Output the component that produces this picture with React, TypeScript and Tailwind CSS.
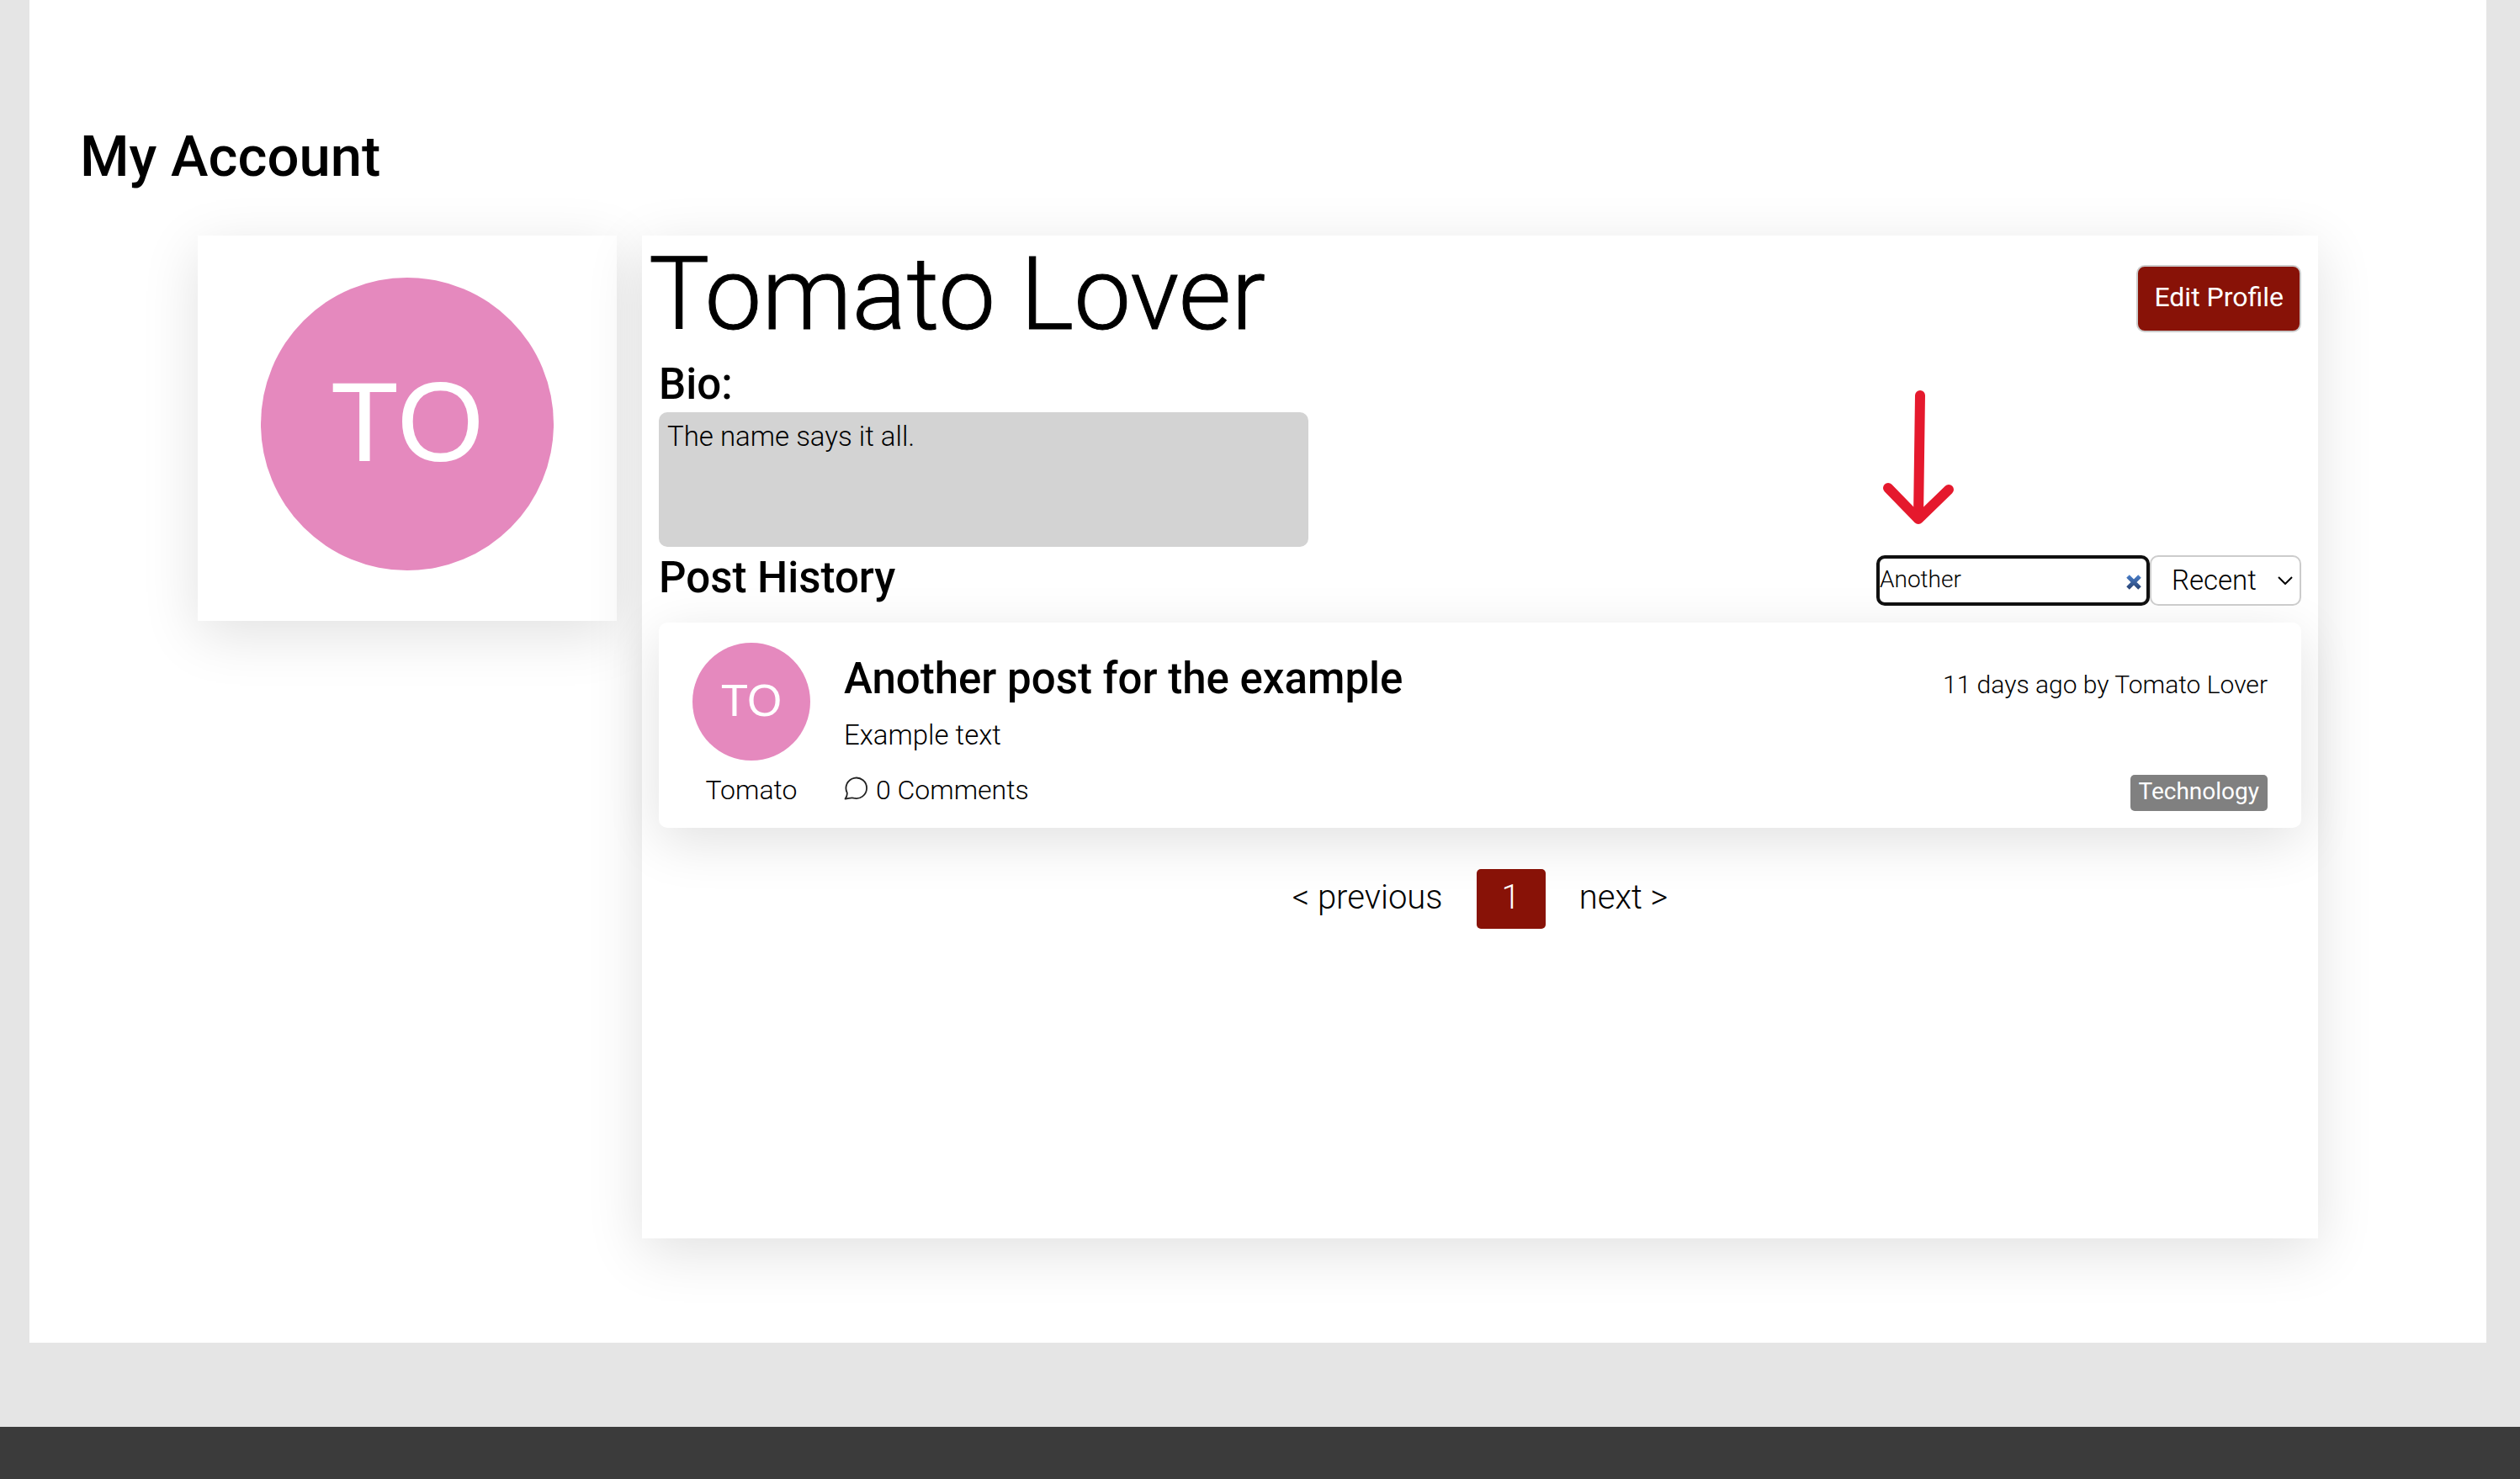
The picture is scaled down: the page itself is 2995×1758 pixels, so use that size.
import { useState } from 'react';

const CARD_SHADOW = 'shadow-[0_16px_64px_rgba(0,0,0,0.12)]';

function CommentIcon() {
  return (
    <svg viewBox="0 0 30 28" className="mb-1 h-7 w-[30px] shrink-0" fill="none" stroke="#222" strokeWidth="1.8" strokeLinejoin="round" aria-hidden="true">
      <path d="M1.5 26.6 C3.4 24.2 4.1 21.6 3.7 19.2 A12.3 12.3 0 1 1 11.6 25.7 C8.2 24.6 5 26.6 1.5 26.6 Z" />
    </svg>
  );
}

function PointerArrow() {
  return (
    <svg
      viewBox="0 0 100 170"
      className="pointer-events-none absolute bottom-[90px] left-0 h-[170px] w-[100px]"
      fill="none"
      stroke="#e5192d"
      strokeWidth="12"
      strokeLinecap="round"
      strokeLinejoin="round"
      aria-hidden="true"
    >
      <path d="M52 10 L50 156" />
      <path d="M14 120 L50 157 L86 122" />
    </svg>
  );
}

function ClearIcon() {
  return (
    <svg viewBox="0 0 18 18" className="h-[18px] w-[18px]" aria-hidden="true">
      <defs>
        <linearGradient id="clear-fill" gradientUnits="userSpaceOnUse" x1="0" y1="0" x2="0" y2="18">
          <stop offset="0" stopColor="#4a80cc" />
          <stop offset="1" stopColor="#27406f" />
        </linearGradient>
      </defs>
      <path d="M2 2 L16 16 M16 2 L2 16" stroke="url(#clear-fill)" strokeWidth="5" />
    </svg>
  );
}

function Avatar({ large = false }: { large?: boolean }) {
  return (
    <div
      className={
        large
          ? "flex aspect-square w-full items-center justify-center rounded-full bg-[#e589be] pb-1 font-['Liberation_Sans',sans-serif] text-[133px] leading-none text-white"
          : "flex size-[140px] items-center justify-center rounded-full bg-[#e589be] pb-1 font-['Liberation_Sans',sans-serif] text-[53px] leading-none text-white"
      }
    >
      TO
    </div>
  );
}

function PostCard() {
  return (
    <article className={`mx-5 flex gap-10 rounded-[10px] bg-white px-10 ${CARD_SHADOW}`}>
      <div className="flex flex-col items-center gap-[15px] py-6">
        <Avatar />
        <span className="text-[32px] leading-10">Tomato</span>
      </div>
      <div className="flex-1 pt-[37px] pb-[25px]">
        <h3 className="text-[51px] leading-[60px] font-medium">Another post for the example</h3>
        <p className="mt-[17px] text-[33px] leading-10">Example text</p>
        <div className="mt-[25px] flex items-center gap-2 text-[32px] leading-10">
          <CommentIcon />
          <span>0 Comments</span>
        </div>
      </div>
      <div className="flex flex-col items-end justify-between pt-[54px] pb-5">
        <span className="text-[30px] leading-10">11 days ago by Tomato Lover</span>
        <span className="rounded-[5px] bg-[#808080] px-2.5 pb-[3px] text-[28px] leading-10 font-normal text-white">Technology</span>
      </div>
    </article>
  );
}

export default function App() {
  const [query, setQuery] = useState('Another');
  const [sort, setSort] = useState('Recent');

  return (
    <div className="flex min-h-screen flex-col bg-[#e5e5e5] font-['Roboto',sans-serif] font-light text-black">
      <main className="mr-10 mb-[100px] ml-[35px] bg-white pt-[146px] pb-[124px]">
        <h1 className="pl-[60px] text-[67px] leading-20 font-medium">My Account</h1>

        <div className="mx-[200px] mt-[54px] grid grid-cols-[1fr_4fr] items-start gap-[30px]">
          <aside className={`bg-white px-[75px] pt-[50px] pb-[60px] ${CARD_SHADOW}`}>
            <Avatar large />
          </aside>

          <section className={`min-h-[1192px] bg-white ${CARD_SHADOW}`}>
            <div className="flex items-start justify-between pr-5 pb-1 pl-2">
              <h2 className="text-[121px] leading-[140px] [-webkit-text-stroke:1px_#000]">Tomato Lover</h2>
              <button type="button" className="mt-[35px] h-20 rounded-[10px] border-2 border-[#ccc] bg-[#881207] px-[19px] pb-1 text-[32px] font-normal text-white">
                Edit Profile
              </button>
            </div>

            <h3 className="px-5 text-[51px] leading-[66px] font-medium">Bio:</h3>
            <p className="mx-5 h-[160px] w-2/5 max-w-[772px] rounded-[10px] bg-[#d3d3d3] p-2.5 text-[33px] leading-[38px]">The name says it all.</p>

            <div className="mx-5 flex items-start justify-between pt-2.5 pb-5">
              <h3 className="text-[51px] leading-[54px] font-medium">Post History</h3>
              <div className="flex">
                <div className="relative w-[325px]">
                  <PointerArrow />
                  <input
                    type="text"
                    aria-label="Search posts"
                    value={query}
                    onChange={(e) => setQuery(e.target.value)}
                    className="h-[60px] w-full rounded-[10px] border-4 border-[#101010] bg-white pr-10 pb-[3px] text-[28px] outline-none"
                  />
                  <button type="button" aria-label="Clear search" onClick={() => setQuery('')} className="absolute top-[23px] right-2.5">
                    <ClearIcon />
                  </button>
                </div>
                <div className="relative w-[180px]">
                  <select
                    aria-label="Sort posts"
                    value={sort}
                    onChange={(e) => setSort(e.target.value)}
                    className="h-[60px] w-full appearance-none rounded-[10px] border-2 border-[#ccc] bg-white pl-6 text-[33px]"
                  >
                    <option>Recent</option>
                    <option>Oldest</option>
                  </select>
                  <svg viewBox="0 0 18 10" className="pointer-events-none absolute top-[25px] right-2.5 h-2.5 w-[18px]" fill="none" stroke="#000" strokeWidth="2" aria-hidden="true">
                    <path d="M1 1 L9 9 L17 1" />
                  </svg>
                </div>
              </div>
            </div>

            <PostCard />

            <nav aria-label="Pagination" className="mt-[49px] flex items-start justify-center gap-10 text-[40px] leading-[68px]">
              <button type="button">&lt; previous</button>
              <button type="button" aria-current="page" className="rounded-[5px] bg-[#881207] px-[30px] pb-[3px] text-white">
                1
              </button>
              <button type="button">next &gt;</button>
            </nav>
          </section>
        </div>
      </main>
      <footer className="min-h-[62px] flex-1 bg-[#3b3b3b]" />
    </div>
  );
}
